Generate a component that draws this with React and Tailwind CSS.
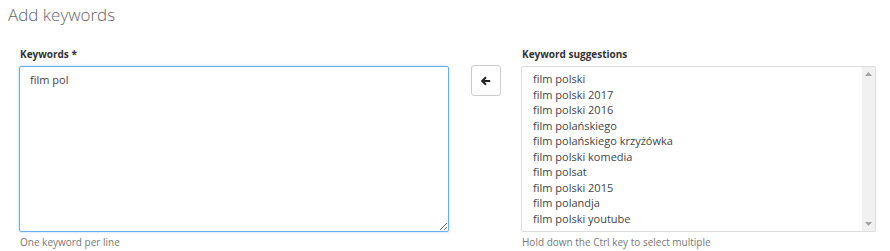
import { useState } from "react";

const suggestions = [
  "film polski",
  "film polski 2017",
  "film polski 2016",
  "film polańskiego",
  "film polańskiego krzyżówka",
  "film polski komedia",
  "film polsat",
  "film polski 2015",
  "film polandja",
  "film polski youtube",
];

export default function App() {
  const [keywords, setKeywords] = useState("film pol");

  return (
    <div className="h-[251px] w-[890px] overflow-hidden bg-white font-['Open_Sans',sans-serif] text-[#555]">
      <h1 className="pl-[8px] pt-[3px] text-[17px] font-light leading-[24px] text-[#666]">Add keywords</h1>

      <div className="mt-[19px] flex pl-[19px]">
        <div className="w-[430px]">
          <label className="block pl-[1px] text-[10px] font-bold leading-[16px] text-[#333]">Keywords *</label>
          <textarea
            value={keywords}
            onChange={(e) => setKeywords(e.target.value)}
            className="mt-[4px] block h-[166px] w-[430px] resize-y rounded-[2px] border border-[#66afe9] px-[10px] py-[5px] text-[11px] leading-[16px] text-[#444] shadow-[0_0_3px_rgba(102,175,233,0.5)] outline-none"
          />
          <div className="mt-[2px] pl-[1px] text-[10px] leading-[16px] text-[#777]">One keyword per line</div>
        </div>

        <div className="ml-[22px] w-[30px] pt-[19px]">
          <button
            type="button"
            className="flex h-[31px] w-[30px] items-center justify-center rounded-[3px] border border-[#ccc] bg-white"
          >
            <svg width="10" height="10" viewBox="0 0 10 10">
              <path d="M1.2 5h8M5 1.2 1.2 5 5 8.8" stroke="#222" strokeWidth="2" fill="none" />
            </svg>
          </button>
        </div>

        <div className="ml-[20px] w-[355px]">
          <label className="block pl-[1px] text-[10px] font-bold leading-[16px] text-[#333]">Keyword suggestions</label>
          <div className="mt-[4px] flex h-[166px] w-[355px] rounded-[2px] border border-[#ddd]">
            <ul className="flex-1 pl-[11px] pt-[4px] text-[11px] leading-[15.5px] text-[#444]">
              {suggestions.map((s) => (
                <li key={s}>{s}</li>
              ))}
            </ul>
            <div className="flex w-[13px] flex-col items-center justify-between bg-[#f1f1f1] py-[5px]">
              <svg width="7" height="4" viewBox="0 0 7 4">
                <path d="M0 4 3.5 0 7 4Z" fill="#a3a3a3" />
              </svg>
              <svg width="7" height="4" viewBox="0 0 7 4">
                <path d="M0 0 3.5 4 7 0Z" fill="#a3a3a3" />
              </svg>
            </div>
          </div>
          <div className="mt-[2px] pl-[1px] text-[10px] leading-[16px] text-[#777]">Hold down the Ctrl key to select multiple</div>
        </div>
      </div>
    </div>
  );
}
